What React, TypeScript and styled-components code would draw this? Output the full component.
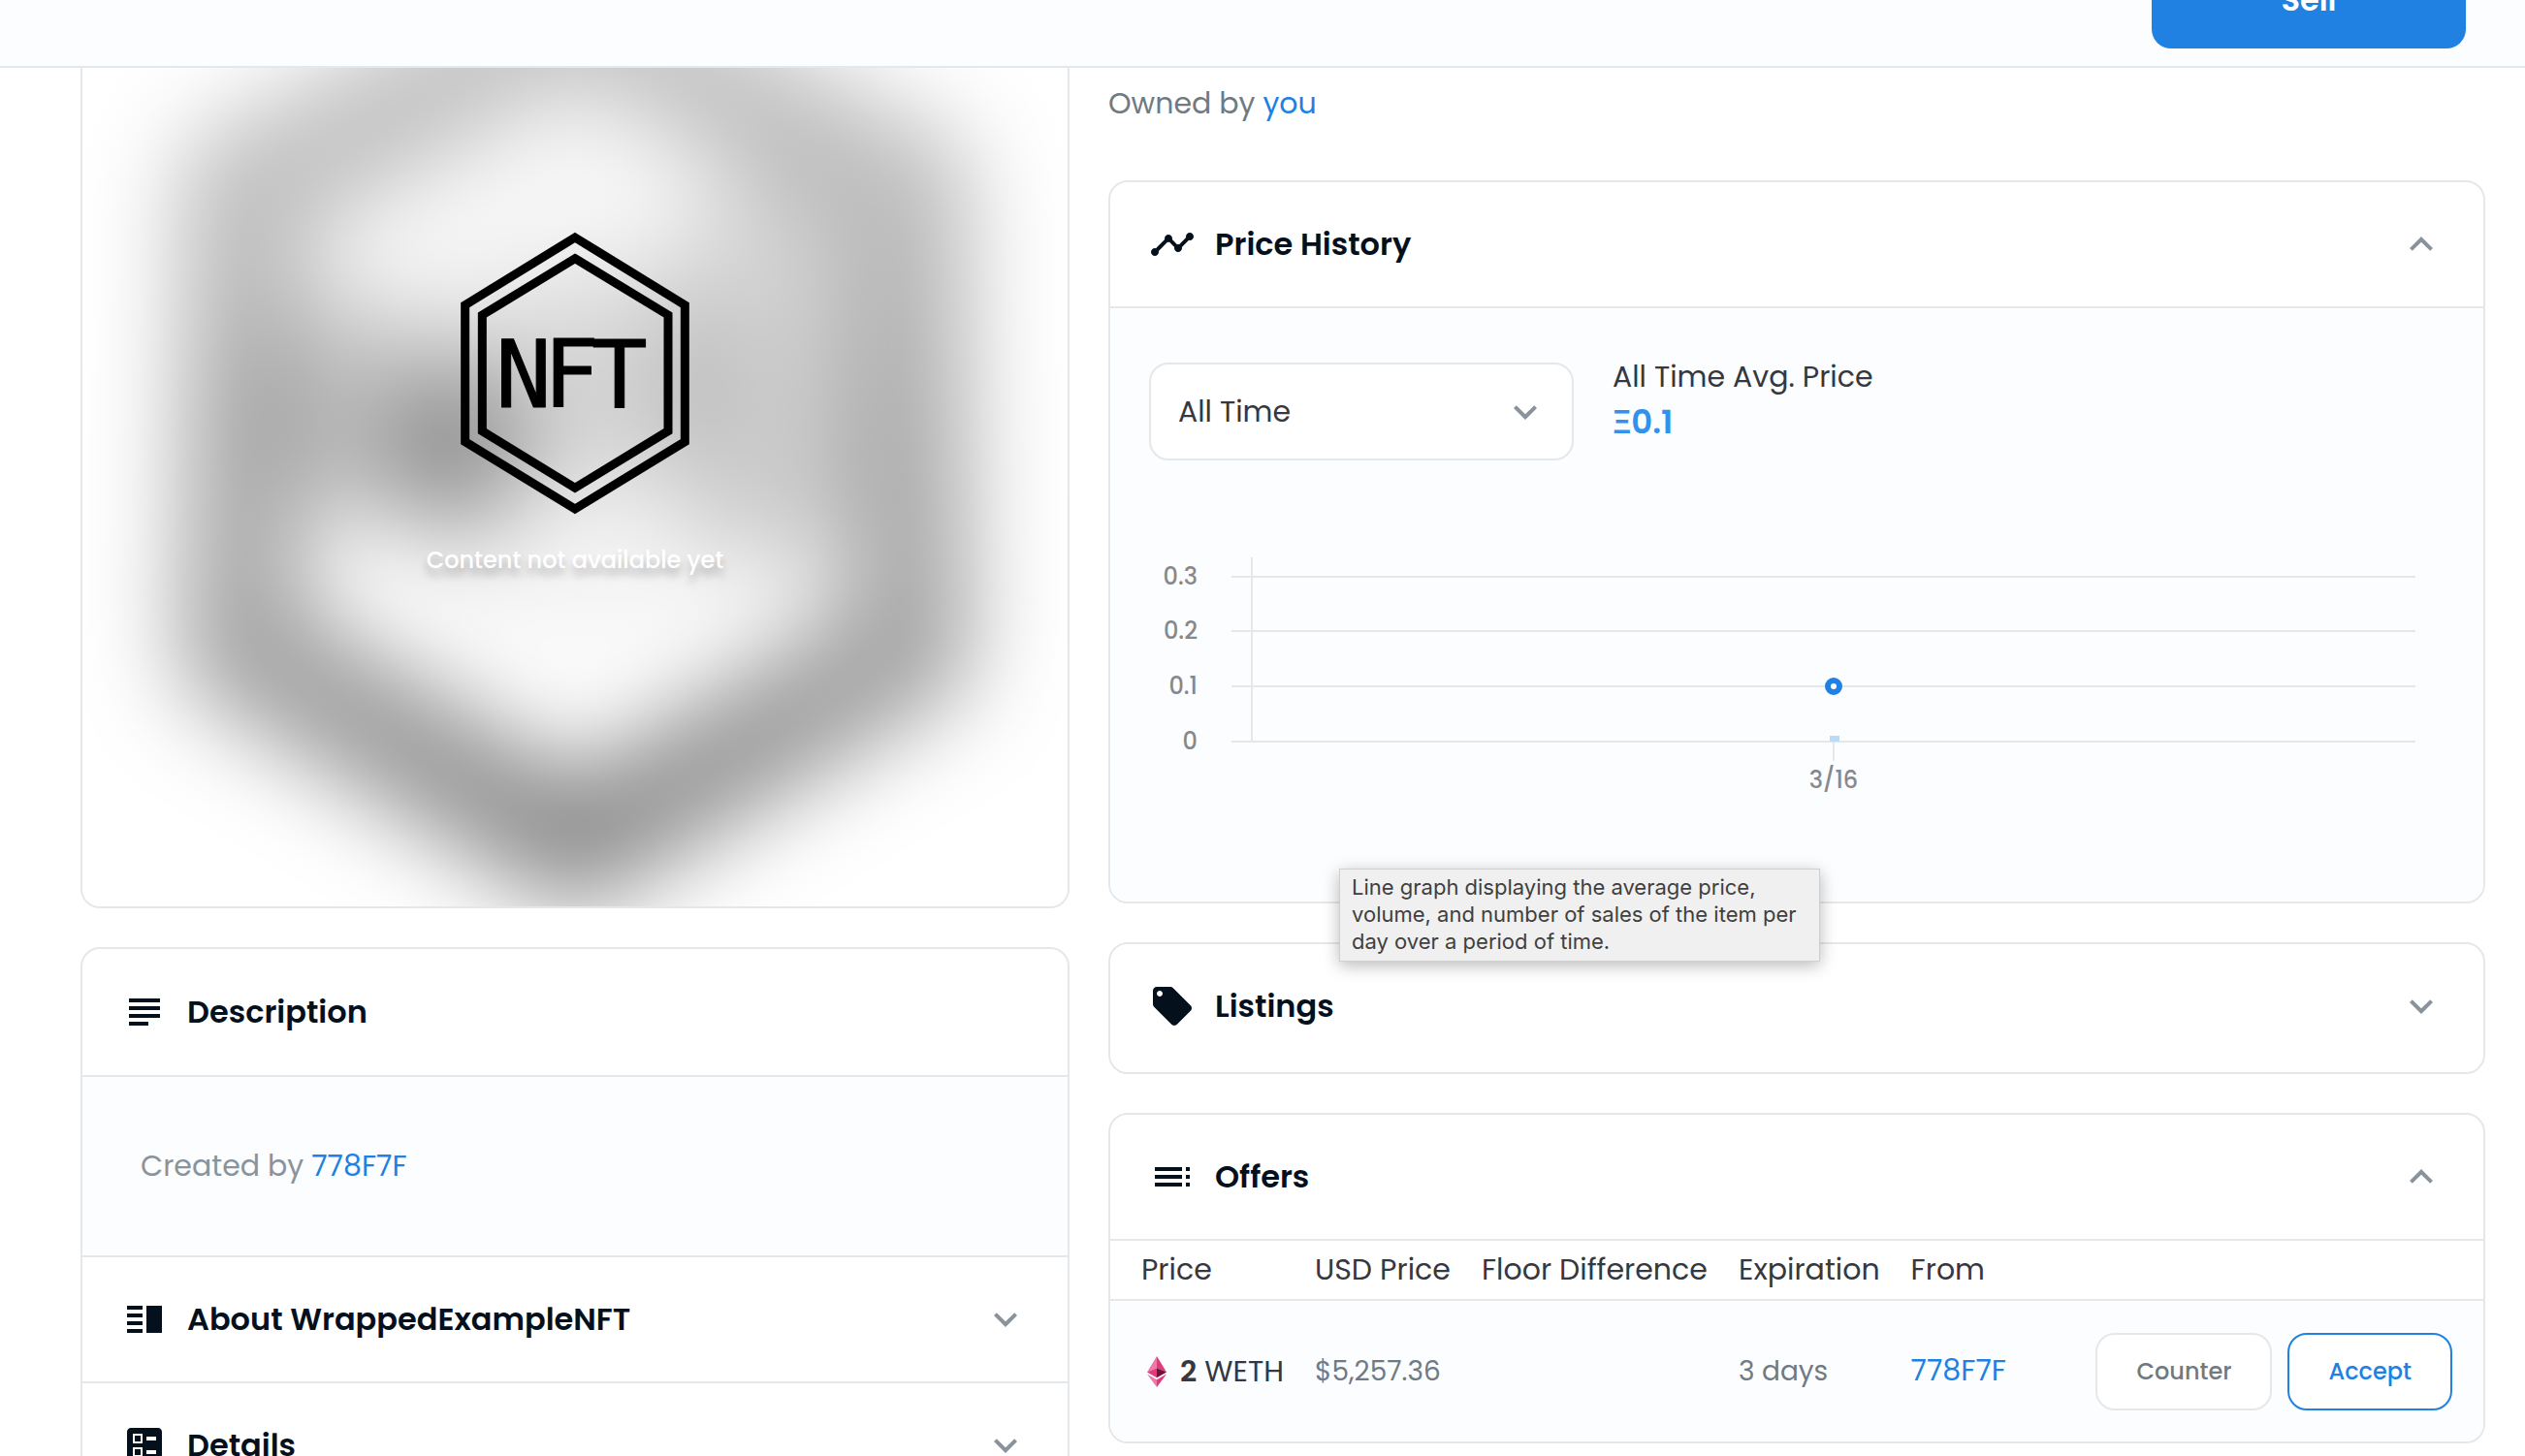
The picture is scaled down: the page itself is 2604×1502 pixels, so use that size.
import React, { useState } from "react";
import styled, { createGlobalStyle } from "styled-components";
import {
  MdBallot,
  MdExpandLess,
  MdExpandMore,
  MdLocalOffer,
  MdSubject,
  MdTimeline,
  MdToc,
  MdVerticalSplit,
} from "react-icons/md";

const color = {
  ink: "#04111d",
  text: "#353840",
  muted: "#707a83",
  faint: "#8a939b",
  line: "#e5e8eb",
  link: "#2081e2",
  tint: "#fbfdff",
};

const GlobalStyle = createGlobalStyle`
  *, *::before, *::after { box-sizing: border-box; }
  body {
    margin: 0;
    background: #ffffff;
    color: ${color.text};
    font-family: Poppins, Inter, "Noto Sans", sans-serif;
    font-size: 30px;
    line-height: 44px;
  }
  button, select { font-family: inherit; cursor: pointer; }
`;

const Page = styled.div`
  height: 100vh;
  overflow: hidden;
`;

const ActionBar = styled.header`
  display: flex;
  justify-content: flex-end;
  align-items: flex-end;
  height: 70px;
  padding: 0 61px 18px;
  overflow: hidden;
  background: ${color.tint};
  border-bottom: 2px solid ${color.line};
`;

const SellButton = styled.button`
  flex: none;
  width: 324px;
  height: 100px;
  border: 0;
  border-radius: 20px;
  background: ${color.link};
  color: #ffffff;
  font-size: 32px;
  font-weight: 600;
`;

const Columns = styled.main`
  display: grid;
  grid-template-columns: minmax(0, 51fr) minmax(0, 71fr);
  gap: 40px;
  padding: 0 41px 40px 83px;
`;

const Column = styled.div`
  display: flex;
  flex-direction: column;
  gap: 40px;
`;

const Media = styled.section`
  position: relative;
  display: flex;
  flex-direction: column;
  align-items: center;
  gap: 22px;
  aspect-ratio: 1020 / 867;
  padding-top: 166px;
  overflow: hidden;
  border: 2px solid ${color.line};
  border-top: 0;
  border-radius: 0 0 20px 20px;
`;

const Backdrop = styled.svg`
  position: absolute;
  inset: 0;
  width: 100%;
  height: 100%;
`;

const Logo = styled.svg`
  position: relative;
  width: 240px;
  height: 298px;
`;

const MediaCaption = styled.p`
  position: relative;
  margin: 0;
  color: #ffffff;
  font-size: 24px;
  font-weight: 500;
  text-shadow: 0 8px 8px rgba(0, 0, 0, 0.25);
`;

const Card = styled.section`
  overflow: hidden;
  border: 2px solid ${color.line};
  border-radius: 20px;
  background: #ffffff;
`;

const ChartCard = styled.div`
  position: relative;
`;

const ListingsSpace = styled.div`
  height: 4px;
`;

const PanelHeading = styled.h2`
  display: flex;
  align-items: center;
  gap: 20px;
  height: 130px;
  margin: 0;
  padding: 0 40px;
  color: ${color.ink};
  font-size: 32px;
  font-weight: 600;
`;

const PanelTitle = styled.h2<{ $divided?: boolean }>`
  margin: 0;
  border-top: ${(p) => (p.$divided ? `2px solid ${color.line}` : "0")};
`;

const PanelToggle = styled.button`
  display: flex;
  align-items: center;
  gap: 20px;
  width: 100%;
  height: 128px;
  padding: 0 40px;
  border: 0;
  background: transparent;
  color: ${color.ink};
  font-size: 32px;
  font-weight: 600;
  text-align: left;
`;

const PanelName = styled.span`
  flex: 1;
`;

const Icon = styled.span<{ $muted?: boolean }>`
  display: flex;
  font-size: 48px;
  color: ${(p) => (p.$muted ? color.faint : "inherit")};
`;

const DescriptionBody = styled.div`
  padding: 70px 60px;
  border-top: 2px solid ${color.line};
  background: ${color.tint};
  color: ${color.faint};
`;

const Link = styled.a`
  color: ${color.link};
  text-decoration: none;
`;

const Owner = styled.p`
  margin: 0;
  padding: 15px 0 17px;
  color: ${color.muted};
`;

const HistoryBody = styled.div`
  display: flex;
  flex-direction: column;
  gap: 40px;
  padding: 56px 40px 40px;
  border-top: 2px solid ${color.line};
  background: ${color.tint};
`;

const HistoryControls = styled.div`
  display: flex;
  gap: 40px;
`;

const SelectBox = styled.label`
  display: grid;
  align-items: center;
  width: 438px;
  height: 101px;

  & > * {
    grid-area: 1 / 1;
  }
`;

const RangeSelect = styled.select`
  appearance: none;
  width: 100%;
  height: 100%;
  padding: 0 28px;
  border: 2px solid ${color.line};
  border-radius: 20px;
  background: #ffffff;
  color: ${color.text};
  font-size: 30px;
`;

const SelectArrow = styled(Icon)`
  justify-self: end;
  padding-right: 26px;
  pointer-events: none;
`;

const Average = styled.div`
  margin-top: -9px;
  line-height: 47px;
`;

const AverageValue = styled.div`
  color: #3291e9;
  font-family: Poppins, Roboto, sans-serif;
  font-size: 34px;
  font-weight: 600;
`;

const Chart = styled.svg`
  display: block;
  width: 100%;
  height: auto;
`;

const Tooltip = styled.div`
  position: absolute;
  left: 238px;
  bottom: -60px;
  width: 496px;
  padding: 4px 12px 6px;
  border: 1px solid #cfcfcf;
  background: #f0f0f0;
  box-shadow: 0 4px 16px rgba(0, 0, 0, 0.28);
  color: #3f3f3f;
  font-family: Inter, sans-serif;
  font-size: 22px;
  line-height: 28px;
`;

const OffersTable = styled.table`
  width: 100%;
  border-collapse: collapse;
  border-top: 2px solid ${color.line};
`;

const HeadCell = styled.th<{ $width?: number }>`
  width: ${(p) => (p.$width ? `${p.$width}px` : "auto")};
  height: 62px;
  padding: 0 16px;
  font-weight: 400;
  text-align: left;
  white-space: nowrap;

  &:first-child {
    padding-left: 32px;
  }
`;

const Cell = styled.td`
  height: 146px;
  padding: 0 16px;
  border-top: 2px solid ${color.line};
  background: ${color.tint};
  color: ${color.muted};
  font-size: 28px;
  white-space: nowrap;

  &:first-child {
    padding-left: 32px;
  }
  &:last-child {
    padding-right: 32px;
  }
`;

const Price = styled.div`
  display: flex;
  align-items: center;
  gap: 8px;
  color: ${color.text};
  font-size: 30px;
`;

const Amount = styled.b`
  font-weight: 600;
`;

const BuyerLink = styled(Link)`
  font-size: 30px;
`;

const EthIcon = styled.svg`
  width: 32px;
  height: 32px;
`;

const Actions = styled.div`
  display: flex;
  justify-content: flex-end;
  gap: 16px;
`;

const OfferButton = styled.button<{ $primary?: boolean }>`
  height: 80px;
  padding: 0 40px;
  border: 2px solid ${(p) => (p.$primary ? color.link : color.line)};
  border-radius: 20px;
  background: #ffffff;
  color: ${(p) => (p.$primary ? color.link : color.muted)};
  font-size: 24px;
  font-weight: 500;
`;

function Mark() {
  return (
    <g fill="none" stroke="#000" strokeWidth="27">
      <path d="M459 78 799 287V710L459 918 119 710V287Z" />
      <path d="M459 143 747 318V677L459 853 172 677V318Z" />
      <text
        x="213 361 510"
        y="604"
        fill="#000"
        strokeWidth="3"
        strokeLinejoin="round"
        fontFamily="'DejaVu Sans Mono', monospace"
        fontSize="288"
      >
        NFT
      </text>
    </g>
  );
}

function BlurredBackdrop() {
  return (
    <Backdrop viewBox="0 0 1016 866" preserveAspectRatio="xMidYMid slice" aria-hidden="true">
      <defs>
        <filter id="soft" filterUnits="userSpaceOnUse" x="-200" y="-300" width="1416" height="1500">
          <feGaussianBlur stdDeviation="50" />
        </filter>
        <linearGradient id="fade" x1="0" y1="0" x2="0" y2="1">
          <stop offset="0" stopColor="#fff" stopOpacity="0.62" />
          <stop offset="0.6" stopColor="#fff" stopOpacity="0.42" />
          <stop offset="1" stopColor="#fff" stopOpacity="0.24" />
        </linearGradient>
      </defs>
      <g filter="url(#soft)" fill="none" stroke="#000">
        <path strokeWidth="38" d="M508 -98 884 100V616L508 836 132 616V100Z" />
        <path strokeWidth="38" d="M508 -28 818 142V576L508 766 198 576V142Z" />
        <ellipse cx="385" cy="392" rx="74" ry="84" fill="#000" fillOpacity="0.75" stroke="none" />
        <ellipse cx="285" cy="350" rx="120" ry="110" fill="#000" fillOpacity="0.42" stroke="none" />
        <ellipse cx="530" cy="320" rx="150" ry="110" fill="#000" fillOpacity="0.26" stroke="none" />
        <ellipse cx="710" cy="310" rx="120" ry="210" fill="#000" fillOpacity="0.32" stroke="none" />
        <ellipse cx="508" cy="260" rx="290" ry="330" fill="#000" fillOpacity="0.08" stroke="none" />
      </g>
      <rect width="1016" height="866" fill="url(#fade)" />
    </Backdrop>
  );
}

const ticks = [
  { label: "0.3", y: 80 },
  { label: "0.2", y: 136 },
  { label: "0.1", y: 193 },
  { label: "0", y: 250 },
];

function PriceChart() {
  return (
    <Chart viewBox="0 0 1336 375" role="img" aria-label="Average price per day">
      <g stroke={color.line} strokeWidth="2">
        {ticks.map((t) => (
          <line key={t.label} x1="85" x2="1306" y1={t.y} y2={t.y} />
        ))}
        <line x1="106" x2="106" y1="60" y2="250" />
        <line x1="706" x2="706" y1="251" y2="270" />
      </g>
      <g fill="#86888c" fontSize="24" fontWeight="500">
        {ticks.map((t) => (
          <text key={t.label} x="50" y={t.y + 8} textAnchor="end">
            {t.label}
          </text>
        ))}
        <text x="706" y="298" textAnchor="middle">
          3/16
        </text>
      </g>
      <rect x="702" y="244" width="10" height="6" fill="#bcd9f7" />
      <circle cx="706" cy="193" r="6" fill="#fff" stroke={color.link} strokeWidth="6" />
    </Chart>
  );
}

type PanelProps = { icon: React.ReactNode; name: string; open?: boolean; divided?: boolean };

function PanelHeader({ icon, name, open = false, divided }: PanelProps) {
  return (
    <PanelTitle $divided={divided}>
      <PanelToggle type="button" aria-expanded={open}>
        <Icon>{icon}</Icon>
        <PanelName>{name}</PanelName>
        <Icon $muted>{open ? <MdExpandLess /> : <MdExpandMore />}</Icon>
      </PanelToggle>
    </PanelTitle>
  );
}

export default function App() {
  const [range, setRange] = useState("All Time");

  return (
    <>
      <GlobalStyle />
      <Page>
        <ActionBar>
          <SellButton type="button">Sell</SellButton>
        </ActionBar>
        <Columns>
          <Column>
            <Media>
              <BlurredBackdrop />
              <Logo viewBox="99 51 720 894">
                <Mark />
              </Logo>
              <MediaCaption>Content not available yet</MediaCaption>
            </Media>
            <Card>
              <PanelHeading>
                <Icon>
                  <MdSubject />
                </Icon>
                Description
              </PanelHeading>
              <DescriptionBody>
                Created by <Link href="#creator">778F7F</Link>
              </DescriptionBody>
              <PanelHeader icon={<MdVerticalSplit />} name="About WrappedExampleNFT" divided />
              <PanelHeader icon={<MdBallot />} name="Details" divided />
            </Card>
          </Column>

          <Column>
            <Owner>
              Owned by <Link href="#you">you</Link>
            </Owner>
            <ChartCard>
              <Card>
                <PanelHeader icon={<MdTimeline />} name="Price History" open />
                <HistoryBody>
                  <HistoryControls>
                    <SelectBox>
                      <RangeSelect
                        aria-label="Time range"
                        value={range}
                        onChange={(e) => setRange(e.target.value)}
                      >
                        <option>All Time</option>
                      </RangeSelect>
                      <SelectArrow $muted>
                        <MdExpandMore />
                      </SelectArrow>
                    </SelectBox>
                    <Average>
                      {range} Avg. Price
                      <AverageValue>Ξ0.1</AverageValue>
                    </Average>
                  </HistoryControls>
                  <PriceChart />
                </HistoryBody>
              </Card>
              <Tooltip role="tooltip">
                Line graph displaying the average price, volume, and number of sales of the item per
                day over a period of time.
              </Tooltip>
            </ChartCard>
            <Card>
              <PanelHeader icon={<MdLocalOffer />} name="Listings" />
              <ListingsSpace />
            </Card>
            <Card>
              <PanelHeader icon={<MdToc />} name="Offers" open />
              <OffersTable>
                <thead>
                  <tr>
                    <HeadCell $width={195}>Price</HeadCell>
                    <HeadCell $width={172}>USD Price</HeadCell>
                    <HeadCell $width={265}>Floor Difference</HeadCell>
                    <HeadCell $width={177}>Expiration</HeadCell>
                    <HeadCell $width={160}>From</HeadCell>
                    <HeadCell aria-label="Actions" />
                  </tr>
                </thead>
                <tbody>
                  <tr>
                    <Cell>
                      <Price>
                        <EthIcon viewBox="0 0 32 32" aria-hidden="true">
                          <path fill="#ee79a8" d="M16 0 6 16.500 16 12.200Z" />
                          <path fill="#e03a7c" d="M16 0 26 16.500 16 12.200Z" />
                          <path fill="#e03a7c" d="M6 16.500 16 12.200V22.300Z" />
                          <path fill="#6b1437" d="M26 16.500 16 12.200V22.300Z" />
                          <path fill="#ee79a8" d="M6 18.400 16 24.200V32Z" />
                          <path fill="#e03a7c" d="M26 18.400 16 24.200V32Z" />
                        </EthIcon>
                        <span>
                          <Amount>2</Amount> WETH
                        </span>
                      </Price>
                    </Cell>
                    <Cell>$5,257.36</Cell>
                    <Cell />
                    <Cell>3 days</Cell>
                    <Cell>
                      <BuyerLink href="#buyer">778F7F</BuyerLink>
                    </Cell>
                    <Cell>
                      <Actions>
                        <OfferButton type="button">Counter</OfferButton>
                        <OfferButton type="button" $primary>
                          Accept
                        </OfferButton>
                      </Actions>
                    </Cell>
                  </tr>
                </tbody>
              </OffersTable>
            </Card>
          </Column>
        </Columns>
      </Page>
    </>
  );
}
